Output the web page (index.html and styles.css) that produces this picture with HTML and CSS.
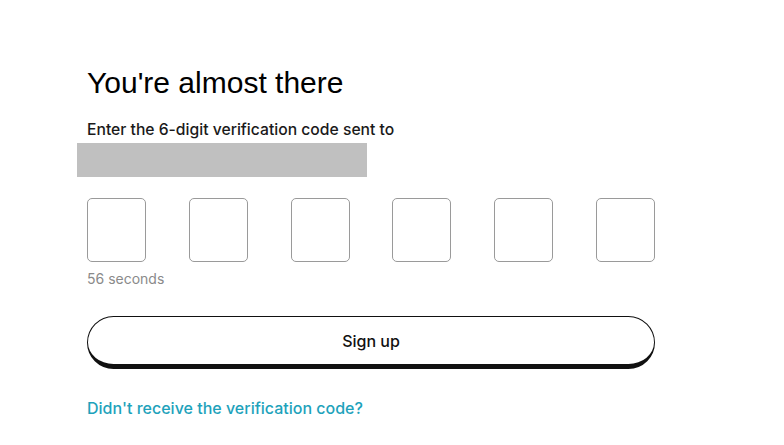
FILE: index.html
```html
<!DOCTYPE html>
<html lang="en">
<head>
<meta charset="utf-8">
<title>Verification</title>
<link rel="stylesheet" href="styles.css">
</head>
<body>
<main class="card">
  <h1 class="title">You're almost there</h1>
  <p class="subtitle">Enter the 6-digit verification code sent to</p>
  <div class="redacted"></div>
  <div class="code-row">
    <input class="code-box" type="text" maxlength="1" aria-label="Digit 1">
    <input class="code-box" type="text" maxlength="1" aria-label="Digit 2">
    <input class="code-box" type="text" maxlength="1" aria-label="Digit 3">
    <input class="code-box" type="text" maxlength="1" aria-label="Digit 4">
    <input class="code-box" type="text" maxlength="1" aria-label="Digit 5">
    <input class="code-box" type="text" maxlength="1" aria-label="Digit 6">
  </div>
  <p class="timer">56 seconds</p>
  <button class="signup" type="button">Sign up</button>
  <a class="resend" href="#">Didn't receive the verification code?</a>
</main>
</body>
</html>
```
FILE: styles.css
```css
html, body {
  margin: 0;
  padding: 0;
  background: #ffffff;
}
body {
  font-family: "Inter", "Liberation Sans", sans-serif;
  color: #111;
}
.card {
  width: 568px;
  padding: 66px 0 0 87px;
  display: flex;
  flex-direction: column;
  align-items: flex-start;
}
.title {
  margin: 0;
  font-family: "Liberation Sans", Arial, sans-serif;
  font-weight: 400;
  font-size: 30px;
  line-height: 34px;
  color: #000;
}
.subtitle {
  margin: 20px 0 0 0;
  font-size: 15.7px;
  line-height: 19px;
  font-weight: 500;
  color: #1a1a1a;
}
.redacted {
  margin: 4px 0 0 -10px;
  width: 290px;
  height: 34px;
  background: #c0c0c0;
}
.code-row {
  margin-top: 21px;
  width: 568px;
  display: flex;
  justify-content: space-between;
}
.code-box {
  box-sizing: border-box;
  width: 59px;
  height: 64px;
  margin: 0;
  padding: 0;
  border: 1px solid #9a9a9a;
  border-radius: 5px;
  background: #fff;
  outline: none;
}
.timer {
  margin: 8px 0 0 0;
  font-size: 14px;
  line-height: 17px;
  color: #8a8a8a;
}
.signup {
  box-sizing: border-box;
  margin-top: 29px;
  width: 568px;
  height: 53px;
  border: 1px solid #111;
  border-bottom-width: 5px;
  border-radius: 27px;
  background: #fff;
  font-family: "Inter", "Liberation Sans", sans-serif;
  font-size: 16px;
  font-weight: 500;
  color: #111;
  padding: 0;
  cursor: pointer;
}
.resend {
  margin-top: 30px;
  font-size: 16px;
  line-height: 19px;
  font-weight: 500;
  color: #1ea2bb;
  text-decoration: none;
}
```
